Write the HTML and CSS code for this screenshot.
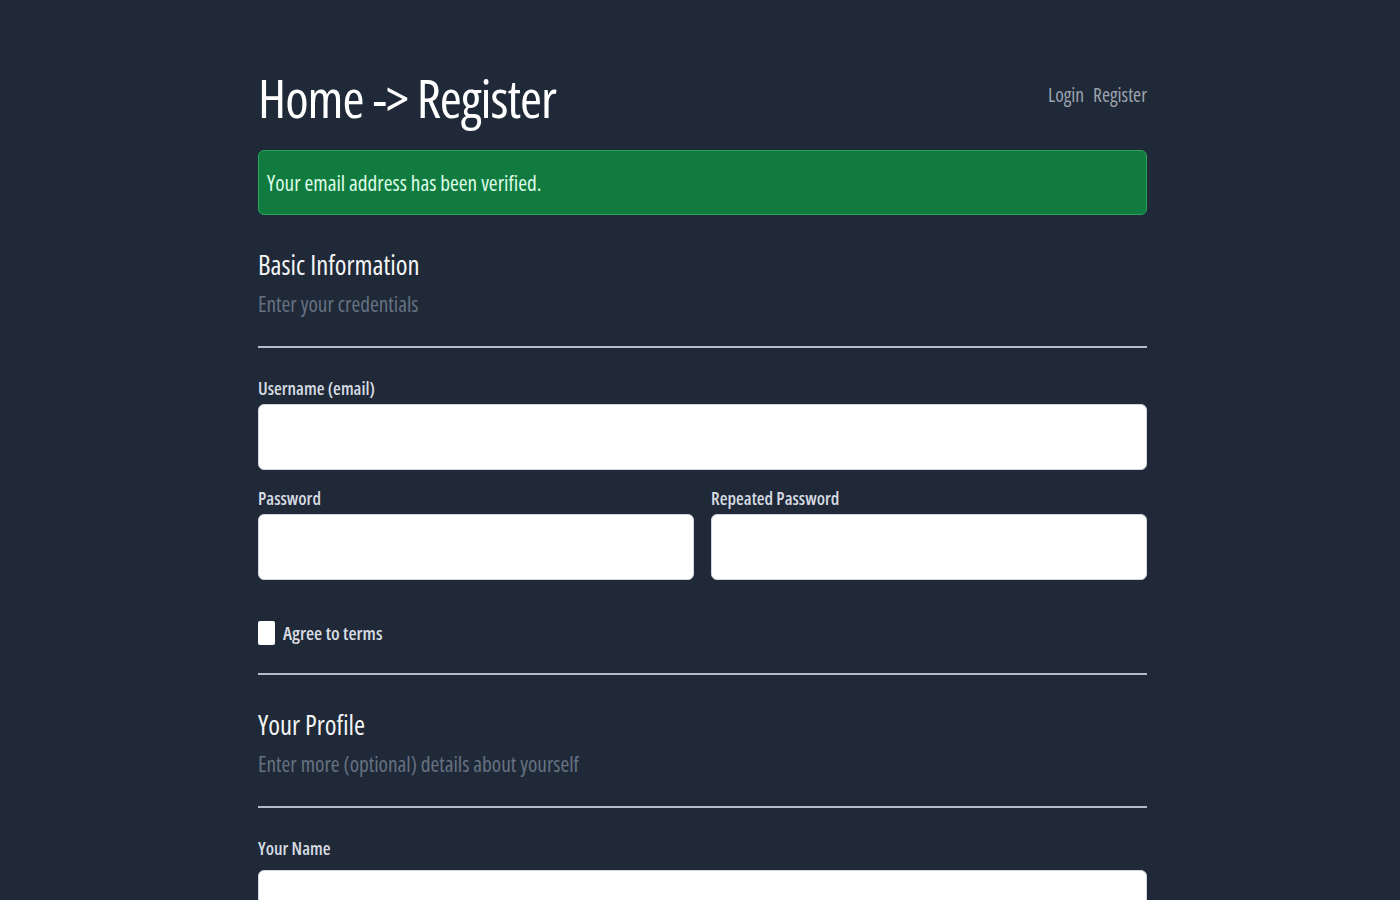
FILE: index.html
```html
<!DOCTYPE html>
<html lang="en">
<head>
<meta charset="utf-8">
<title>Register</title>
<link rel="stylesheet" href="styles.css">
</head>
<body>
<div class="page">
  <header class="header">
    <h1 class="title">Home -&gt; Register</h1>
    <nav class="nav"><a href="#">Login</a><a href="#">Register</a></nav>
  </header>
  <div class="alert">Your email address has been verified.</div>

  <section class="section">
    <h2 class="section-title">Basic Information</h2>
    <p class="section-sub">Enter your credentials</p>
  </section>
  <hr class="rule">

  <div class="field">
    <label class="label">Username (email)</label>
    <input class="input" type="text">
  </div>
  <div class="row">
    <div class="field">
      <label class="label">Password</label>
      <input class="input" type="password">
    </div>
    <div class="field">
      <label class="label">Repeated Password</label>
      <input class="input" type="password">
    </div>
  </div>
  <label class="check"><span class="box"></span><span class="check-text">Agree to terms</span></label>
  <hr class="rule rule-tight">

  <section class="section">
    <h2 class="section-title">Your Profile</h2>
    <p class="section-sub">Enter more (optional) details about yourself</p>
  </section>
  <hr class="rule">

  <div class="field field-last">
    <label class="label">Your Name</label>
    <input class="input" type="text">
  </div>
</div>
</body>
</html>
```
FILE: styles.css
```css
* { box-sizing: border-box; }
html, body { margin: 0; padding: 0; }
body {
  background: #1f2937;
  font-family: "Open Sans", "Liberation Sans Narrow", "DejaVu Sans", sans-serif;
  font-stretch: 75%;
  overflow: hidden;
  height: 900px;
}
.page {
  width: 889px;
  margin: 0 0 0 258px;
}
.header {
  display: flex;
  justify-content: space-between;
  align-items: flex-start;
  padding-top: 66px;
}
.title {
  margin: 0;
  font-weight: 400;
  font-size: 53.3px;
  line-height: 64px;
  color: #ffffff;
  letter-spacing: -1px;
}
.nav {
  display: flex;
  gap: 9px;
  padding-top: 15px;
}
.nav a {
  color: #9ca3af;
  text-decoration: none;
  font-size: 19.5px;
}
.alert {
  margin-top: 20px;
  height: 65px;
  display: flex;
  align-items: center;
  padding: 0 8px;
  background: #117b3f;
  border: 1px solid #2ba35d;
  border-radius: 6px;
  color: #dcfce7;
  font-size: 21.3px;
}
.section { padding-top: 30px; }
.section-title {
  margin: 0;
  font-weight: 400;
  font-size: 26.7px;
  line-height: 40px;
  color: #f3f4f6;
}
.section-sub {
  margin: 0;
  font-size: 21.3px;
  line-height: 38px;
  color: #667282;
}
.rule {
  margin: 23px 0 0;
  border: 0;
  height: 2px;
  background: #b3bcc8;
}
.field {
  display: flex;
  flex-direction: column;
  flex: 1;
}
.label {
  font-weight: 600;
  font-size: 17.9px;
  line-height: 24px;
  color: #d6dbe2;
  margin-top: 28px;
  margin-bottom: 4px;
}
.field-last .label { margin-bottom: 10px; }
.row {
  display: flex;
  gap: 17px;
}
.row .label { margin-top: 16px; }
.input {
  height: 66px;
  width: 100%;
  background: #ffffff;
  border: 1px solid #cfd6df;
  border-radius: 6px;
  font: inherit;
}
.check {
  display: flex;
  align-items: center;
  gap: 8px;
  height: 26px;
  margin-top: 40px;
  margin-bottom: 27px;
}
.rule-tight { margin-top: 0; }
.box {
  width: 17px;
  height: 24px;
  background: #ffffff;
  border-radius: 2px;
}
.check-text {
  font-size: 18.7px;
  font-weight: 600;
  line-height: 26px;
  color: #d6dbe2;
}
```
